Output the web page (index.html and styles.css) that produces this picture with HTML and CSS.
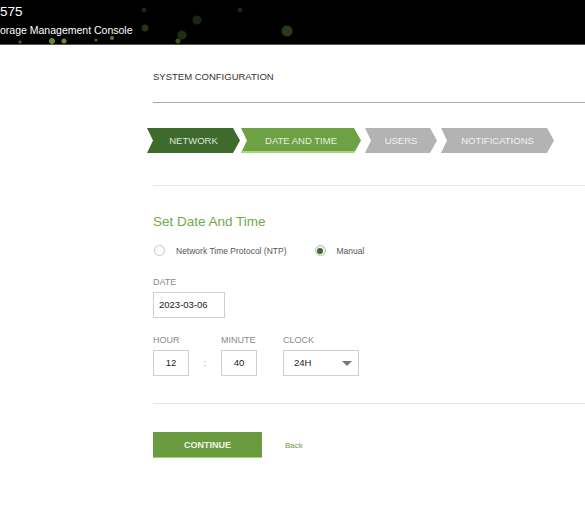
FILE: index.html
```html
<!DOCTYPE html>
<html lang="en">
<head>
<meta charset="UTF-8">
<meta name="viewport" content="width=device-width, initial-scale=1.0">
<title>System Configuration</title>
<link rel="stylesheet" href="styles.css">
</head>
<body>
<header class="top-bar">
  <div class="brand">
    <div class="model">575</div>
    <div class="console-name">orage Management Console</div>
  </div>
</header>

<main class="wizard">
  <h2 class="page-title">SYSTEM CONFIGURATION</h2>

  <div class="steps">
    <div class="step step-done">NETWORK</div>
    <div class="step step-active">DATE AND TIME</div>
    <div class="step step-users">USERS</div>
    <div class="step step-notify">NOTIFICATIONS</div>
  </div>

  <section class="panel">
    <h3 class="panel-title">Set Date And Time</h3>

    <div class="radio-row">
      <label class="radio"><span class="dot"></span>Network Time Protocol (NTP)</label>
      <label class="radio checked"><span class="dot"></span>Manual</label>
    </div>

    <div class="field">
      <div class="field-label">DATE</div>
      <div class="box date-box">2023-03-06</div>
    </div>

    <div class="time-row">
      <div class="field">
        <div class="field-label">HOUR</div>
        <div class="box num-box">12</div>
      </div>
      <span class="colon">:</span>
      <div class="field">
        <div class="field-label">MINUTE</div>
        <div class="box num-box">40</div>
      </div>
      <div class="field clock-field">
        <div class="field-label">CLOCK</div>
        <div class="box select-box">24H <span class="caret"></span></div>
      </div>
    </div>
  </section>

  <div class="actions">
    <button class="continue-btn">CONTINUE</button>
    <a class="back-link" href="#">Back</a>
  </div>
</main>
</body>
</html>
```

FILE: styles.css
```css
body {
  margin: 0;
  font-family: "Liberation Sans", Arial, sans-serif;
  background-color: #fff;
  color: #333;
}

.top-bar {
  height: 44px;
  background-color: #000;
  background-image:
    radial-gradient(circle at 287px 31px, rgba(90, 130, 50, 0.45) 0, rgba(90, 130, 50, 0.45) 5px, transparent 6px),
    radial-gradient(circle at 197px 20px, rgba(90, 130, 50, 0.3) 0, rgba(90, 130, 50, 0.3) 4px, transparent 5px),
    radial-gradient(circle at 64px 41px, rgba(140, 200, 70, 0.7) 0, rgba(140, 200, 70, 0.7) 2px, transparent 3px),
    radial-gradient(circle at 112px 38px, rgba(140, 200, 70, 0.6) 0, rgba(140, 200, 70, 0.6) 1.5px, transparent 2.5px),
    radial-gradient(circle at 145px 28px, rgba(90, 130, 50, 0.4) 0, rgba(90, 130, 50, 0.4) 3px, transparent 4px),
    radial-gradient(circle at 52px 41px, rgba(140, 200, 70, 0.7) 0, rgba(140, 200, 70, 0.7) 2.5px, transparent 3.5px),
    radial-gradient(circle at 178px 41px, rgba(110, 160, 60, 0.5) 0, rgba(110, 160, 60, 0.5) 2px, transparent 3px),
    radial-gradient(circle at 182px 35px, rgba(90, 130, 50, 0.35) 0, rgba(90, 130, 50, 0.35) 4px, transparent 5px),
    radial-gradient(circle at 96px 40px, rgba(140, 200, 70, 0.5) 0, rgba(140, 200, 70, 0.5) 1px, transparent 2px),
    radial-gradient(circle at 144px 10px, rgba(90, 130, 50, 0.3) 0, rgba(90, 130, 50, 0.3) 2px, transparent 3px),
    radial-gradient(circle at 20px 42px, rgba(140, 200, 70, 0.5) 0, rgba(140, 200, 70, 0.5) 1px, transparent 2px),
    radial-gradient(circle at 240px 10px, rgba(90, 130, 50, 0.3) 0, rgba(90, 130, 50, 0.3) 2px, transparent 3px);
  border-bottom: 1px solid #555;
  overflow: hidden;
}

.brand {
  color: #fff;
  padding-top: 4px;
}

.model {
  font-size: 13.5px;
  line-height: 16px;
}

.console-name {
  font-size: 10.5px;
  line-height: 14px;
  margin-top: 3px;
}

.wizard {
  padding-left: 153px;
}

.page-title {
  margin: 0;
  padding-top: 26px;
  font-size: 9.5px;
  font-weight: normal;
  line-height: 12px;
  color: #333;
  padding-bottom: 19px;
  border-bottom: 1.5px solid #a8a8a8;
}

.steps {
  display: flex;
  gap: 4px;
  margin-top: 25px;
  margin-left: -6px;
}

.step {
  height: 25px;
  line-height: 25px;
  font-size: 9.5px;
  text-align: center;
  color: #f2f2f2;
  clip-path: polygon(0 0, calc(100% - 7px) 0, 100% 50%, calc(100% - 7px) 100%, 0 100%, 6px 50%);
}

.step-done {
  width: 93px;
  margin-right: -3px;
  background-color: #3e6a2c;
  color: #dfe7d8;
}

.step-active {
  width: 120px;
  background-color: #6da143;
  color: #e8f0df;
  box-shadow: inset 0 -2px 0 #a9d57c;
}

.step-users {
  width: 72px;
  background-color: #b3b3b3;
}

.step-notify {
  width: 113px;
  background-color: #b3b3b3;
}

.panel {
  margin-top: 32px;
  border-top: 1px solid #e6e6e6;
  padding-top: 28px;
  padding-bottom: 27px;
  border-bottom: 1px solid #e6e6e6;
}

.panel-title {
  margin: 0;
  font-size: 13.5px;
  font-weight: normal;
  line-height: 16px;
  color: #74a84a;
}

.radio-row {
  display: flex;
  gap: 28px;
  margin-top: 15px;
  margin-left: 1px;
}

.radio {
  display: flex;
  align-items: center;
  gap: 11px;
  font-size: 8.5px;
  color: #555;
}

.dot {
  width: 11px;
  height: 11px;
  border: 1px solid #c4c4c4;
  border-radius: 50%;
  box-sizing: border-box;
  display: flex;
  align-items: center;
  justify-content: center;
}

.radio.checked .dot {
  border-color: #b9b9b9;
  background-color: #eef2ea;
}

.radio.checked .dot::after {
  content: "";
  width: 6px;
  height: 6px;
  border-radius: 50%;
  background-color: #3e6a2c;
}

.field {
  margin-top: 20px;
}

.field-label {
  font-size: 9px;
  line-height: 12px;
  color: #8a8a8a;
  margin-bottom: 4px;
}

.box {
  height: 26px;
  box-sizing: border-box;
  border: 1px solid #cfcfcf;
  font-size: 9.5px;
  line-height: 24px;
  color: #222;
}

.date-box {
  width: 72px;
  padding-left: 5px;
}

.time-row {
  display: flex;
  align-items: flex-end;
  margin-top: -4px;
}

.num-box {
  width: 36px;
  text-align: center;
}

.colon {
  width: 32px;
  text-align: center;
  font-size: 9px;
  color: #999;
  line-height: 26px;
}

.clock-field {
  margin-left: 26px;
}

.select-box {
  width: 76px;
  padding-left: 10px;
  display: flex;
  align-items: center;
  justify-content: space-between;
  padding-right: 6px;
}

.caret {
  width: 0;
  height: 0;
  border-left: 5px solid transparent;
  border-right: 5px solid transparent;
  border-top: 5px solid #777;
}

.actions {
  display: flex;
  align-items: center;
  gap: 23px;
  margin-top: 28px;
}

.continue-btn {
  width: 109px;
  height: 26px;
  background-color: #6a9c3f;
  color: #eef4e6;
  font-family: inherit;
  font-size: 9px;
  font-weight: bold;
  border: none;
  border-bottom: 1px solid #a3d07a;
  padding: 0;
}

.back-link {
  font-size: 8px;
  color: #6a9c3f;
  text-decoration: none;
}
```
